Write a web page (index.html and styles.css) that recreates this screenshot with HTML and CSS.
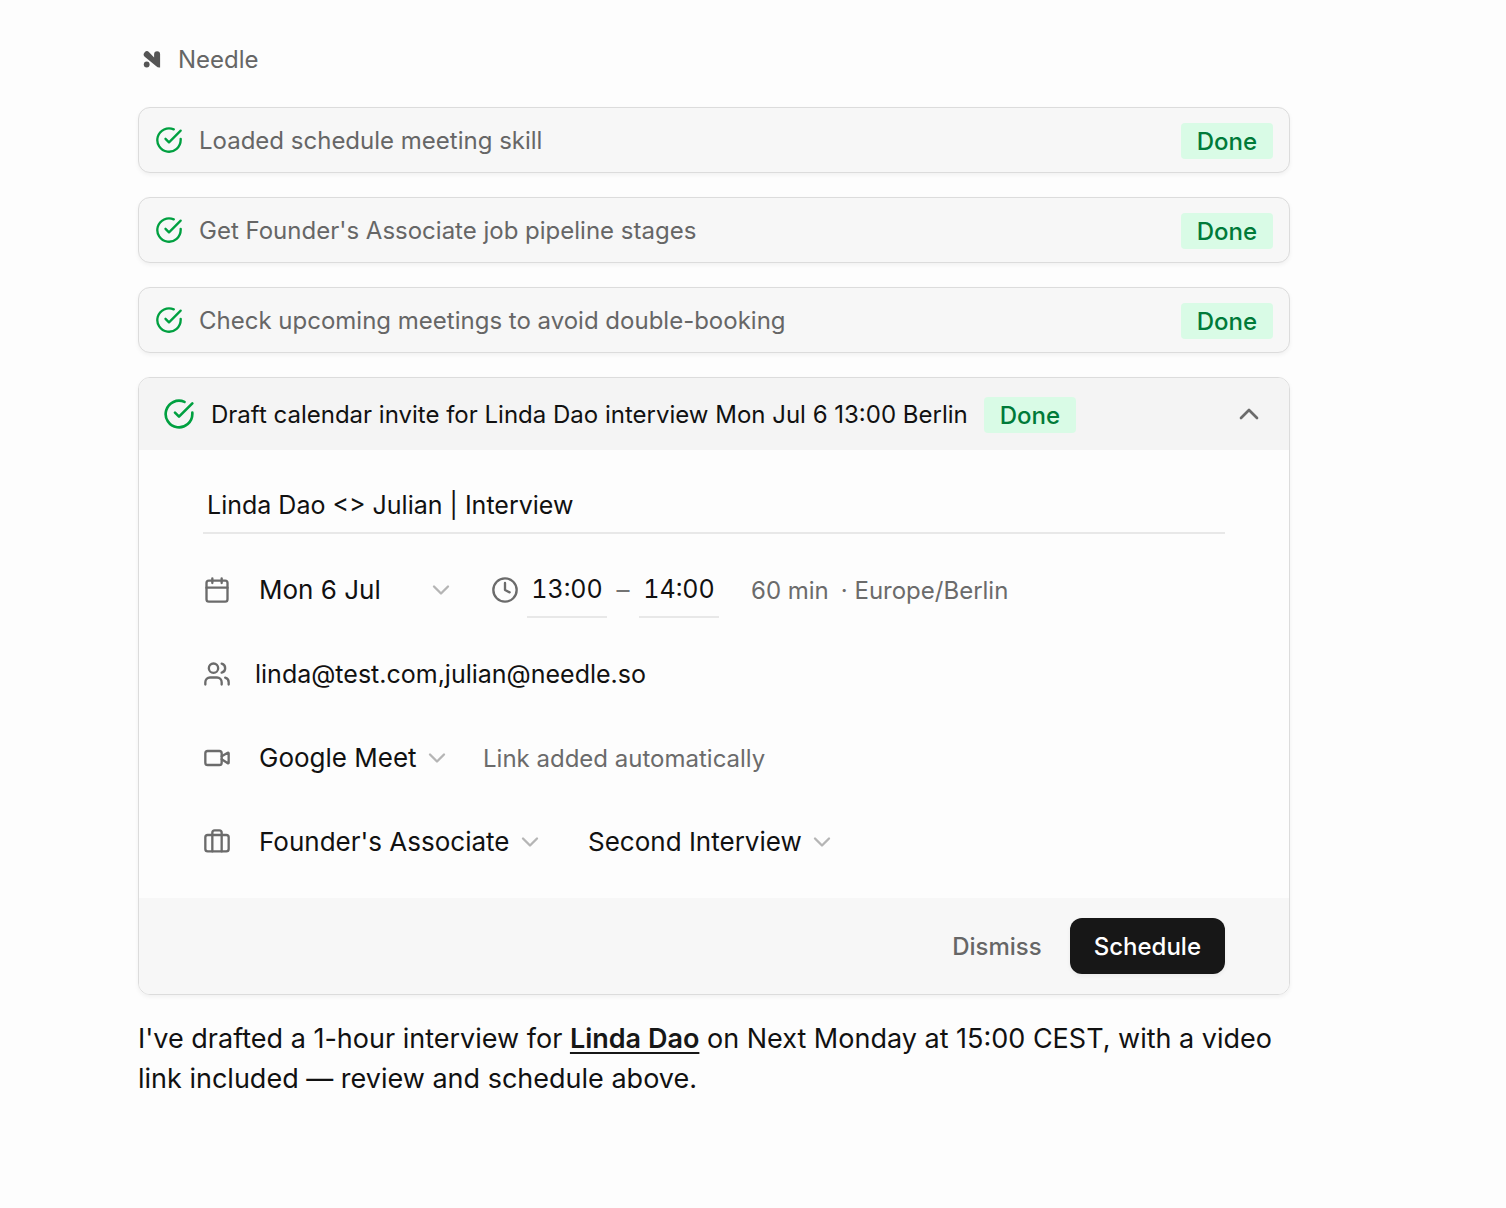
FILE: index.html
```html
<!DOCTYPE html>
<html lang="en">
<head>
<meta charset="utf-8">
<meta name="viewport" content="width=device-width, initial-scale=1">
<title>Needle</title>
<link rel="stylesheet" href="styles.css">
</head>
<body>
<svg class="sprite" aria-hidden="true">
  <symbol id="check" viewBox="0 0 24 24"><path d="M22 11v1a10 10 0 1 1-5.900-9.100"/><path d="m9 11 3 3L22 4"/></symbol>
  <symbol id="down" viewBox="0 0 24 24"><path d="m6 9 6 6 6-6"/></symbol>
  <symbol id="up" viewBox="0 0 24 24"><path d="m18 15-6-6-6 6"/></symbol>
</svg>
<main class="thread">
  <header class="author">
    <svg class="logo" viewBox="0 0 28 28" aria-hidden="true"><circle cx="8.700" cy="18.500" r="2.900"/><path d="M6.700 6.200a3 3 0 0 1 4.400 0l5 5.300V8.200a3 3 0 0 1 6 0V21.500h-.8c-1.200 0-2.200-.4-3-1.200L6.700 10.700a3.200 3.200 0 0 1 0-4.500z"/></svg>
    <span>Needle</span>
  </header>

  <section class="step">
    <svg class="icon check"><use href="#check"/></svg>
    <span class="step-name">Loaded schedule meeting skill</span>
    <span class="badge">Done</span>
  </section>
  <section class="step">
    <svg class="icon check"><use href="#check"/></svg>
    <span class="step-name">Get Founder's Associate job pipeline stages</span>
    <span class="badge">Done</span>
  </section>
  <section class="step">
    <svg class="icon check"><use href="#check"/></svg>
    <span class="step-name">Check upcoming meetings to avoid double-booking</span>
    <span class="badge">Done</span>
  </section>

  <form class="card">
    <header class="card-head">
      <svg class="icon check large"><use href="#check"/></svg>
      <h2 class="card-title">Draft calendar invite for Linda Dao interview Mon Jul 6 13:00 Berlin</h2>
      <span class="badge">Done</span>
      <button class="toggle" type="button" aria-label="Collapse"><svg class="icon"><use href="#up"/></svg></button>
    </header>
    <div class="card-body">
      <input class="field" type="text" aria-label="Title" value="Linda Dao &lt;&gt; Julian | Interview">
      <div class="row">
        <svg class="icon" viewBox="0 0 24 24"><path d="M8 2v4M16 2v4M3 10h18"/><rect x="3" y="4" width="18" height="18" rx="2"/></svg>
        <div class="row-main">
          <span class="picker date-picker"><select aria-label="Date"><option>Mon 6 Jul</option></select><svg class="icon"><use href="#down"/></svg></span>
          <div class="times">
            <svg class="icon" viewBox="0 0 24 24"><circle cx="12" cy="12" r="10"/><path d="M12 6v6l4 2"/></svg>
            <input class="field time-field" type="text" aria-label="Start time" value="13:00">
            <span class="dash">–</span>
            <input class="field time-field" type="text" aria-label="End time" value="14:00">
          </div>
          <span class="note zone"><span>60 min</span><span>· Europe/Berlin</span></span>
        </div>
      </div>
      <div class="row">
        <svg class="icon" viewBox="0 0 24 24"><path d="M16 21v-2a4 4 0 0 0-4-4H6a4 4 0 0 0-4 4v2M16 3.128a4 4 0 0 1 0 7.744M22 21v-2a4 4 0 0 0-3-3.870"/><circle cx="9" cy="7" r="4"/></svg>
        <input class="field guests" type="text" aria-label="Guests" value="linda@test.com,julian@needle.so">
      </div>
      <div class="row">
        <svg class="icon" viewBox="0 0 24 24"><path d="m16 13 5.223 3.482a.5.500 0 0 0 .777-.416V7.870a.5.500 0 0 0-.752-.432L16 10.500"/><rect x="2" y="6" width="14" height="12" rx="2"/></svg>
        <div class="row-main">
          <span class="picker"><select aria-label="Video call"><option>Google Meet</option></select><svg class="icon"><use href="#down"/></svg></span>
          <span class="note">Link added automatically</span>
        </div>
      </div>
      <div class="row">
        <svg class="icon" viewBox="0 0 24 24"><rect x="2" y="6" width="20" height="14" rx="2"/><path d="M16 20V4a2 2 0 0 0-2-2h-4a2 2 0 0 0-2 2v16"/></svg>
        <div class="row-main wide">
          <span class="picker"><select aria-label="Job"><option>Founder's Associate</option></select><svg class="icon"><use href="#down"/></svg></span>
          <span class="picker"><select aria-label="Stage"><option>Second Interview</option></select><svg class="icon"><use href="#down"/></svg></span>
        </div>
      </div>
    </div>
    <footer class="card-foot">
      <button class="btn" type="button">Dismiss</button>
      <button class="btn primary" type="button">Schedule</button>
    </footer>
  </form>

  <p class="message">I've drafted a 1-hour interview for <a href="#linda">Linda Dao</a> on Next Monday at 15:00 CEST, with a video link included — review and schedule above.</p>
</main>
</body>
</html>
```

FILE: styles.css
```css
* { box-sizing: border-box; }

body {
  margin: 0;
  background: #fdfdfd;
  color: #111;
  font: 24px/36px Inter, sans-serif;
}

input, select, button { font: inherit; color: inherit; }

.sprite { display: none; }

.thread {
  display: flex;
  flex-direction: column;
  gap: 24px;
  padding: 36px 216px 100px 138px;
}

.author {
  display: flex;
  align-items: center;
  gap: 12px;
  height: 47px;
  color: #666;
}

.logo { width: 28px; height: 28px; fill: #555; }

.icon {
  flex: none;
  width: 28px;
  height: 28px;
  fill: none;
  stroke: #6b6b6b;
  stroke-width: 2;
  stroke-linecap: round;
  stroke-linejoin: round;
}

.icon.check { stroke: #00a040; }
.icon.large { width: 32px; height: 32px; }

.step {
  display: flex;
  align-items: center;
  gap: 16px;
  padding: 13px 16px;
  border: 1px solid #dcdcdc;
  border-radius: 12px;
  background: #f7f7f7;
  box-shadow: 0 2px 4px #0000000d;
  color: #666;
}

.step-name, .card-title, .note { padding-top: 2px; }

.step-name { flex: 1; }

.badge {
  flex: none;
  margin-top: 2px;
  padding: 2px 16px 0;
  border-radius: 4px;
  background: #d9fbe6;
  color: #007a39;
  font-weight: 500;
  line-height: 34px;
}

.card {
  overflow: hidden;
  border: 1px solid #dcdcdc;
  border-radius: 12px;
  box-shadow: 0 2px 4px #0000000d;
}

.card-head {
  display: flex;
  align-items: center;
  gap: 16px;
  padding: 17px 24px;
  background: #f4f4f4;
}

.card-title { margin: 0; font-size: 24px; font-weight: 400; }

.toggle {
  display: flex;
  margin-left: auto;
  padding: 0;
  border: 0;
  background: none;
}

.toggle .icon { width: 32px; height: 32px; }

.card-body {
  display: flex;
  flex-direction: column;
  gap: 28px;
  padding: 28px 64px;
  font-size: 26px;
}

.field {
  width: 100%;
  height: 56px;
  padding: 0 4px;
  border: 0;
  border-bottom: 2px solid #e8e8e8;
  outline: 0;
  background: none;
  font-size: 25px;
}

.row {
  display: flex;
  align-items: center;
  gap: 24px;
  min-height: 56px;
}

.row-main { display: flex; align-items: center; gap: 32px; }
.row-main.wide { gap: 40px; }

.guests { padding: 0; border: 0; }

.picker { display: grid; align-items: center; }
.picker select {
  grid-area: 1 / 1;
  padding: 0 34px 0 4px;
  border: 0;
  outline: 0;
  background: none;
  appearance: none;
}
.picker .icon {
  grid-area: 1 / 1;
  justify-self: end;
  stroke: #b5b5b5;
  pointer-events: none;
}
.date-picker { width: 200px; margin-right: 4px; }

.times { display: flex; align-items: center; gap: 8px; }
.time-field {
  width: 80px;
  padding: 0;
  font-variant-numeric: tabular-nums;
  text-align: center;
}
.dash { width: 16px; color: #737373; text-align: center; }

.note { color: #6b6b6b; font-size: 24px; }
.zone { display: flex; gap: 12px; }

.card-foot {
  display: flex;
  justify-content: flex-end;
  gap: 4px;
  padding: 20px 64px;
  background: #f7f7f7;
}

.btn {
  height: 56px;
  padding: 2px 24px 0;
  border: 0;
  border-radius: 12px;
  background: none;
  color: #666;
  font-weight: 500;
}

.btn.primary {
  background: #171717;
  color: #fff;
  box-shadow: 0 2px 4px #0000000d;
}

.message { margin: 0; font-size: 27px; line-height: 40px; }
.message a {
  color: #171717;
  font-weight: 600;
  text-decoration: underline 2px;
  text-underline-offset: 4px;
}
```
